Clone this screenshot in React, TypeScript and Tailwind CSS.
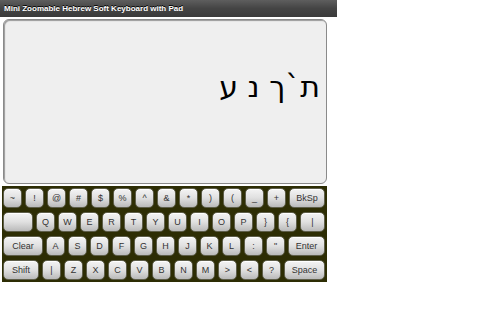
import React from "react";

const Key = ({ label, w }: { label: string; w?: string }) => (
  <div
    className={`${w ?? "w-[19px]"} h-[20px] shrink-0 rounded-[5px] border border-[#5e5e4a] bg-gradient-to-b from-[#f4f4f4] via-[#e0e0e0] to-[#bababa] shadow-[inset_0_1px_0_#ffffff] flex items-center justify-center text-[9px] leading-none text-[#333] font-['Liberation_Sans',Arial,sans-serif]`}
  >
    {label}
  </div>
);

export default function App() {
  const row1 = ["~", "!", "@", "#", "$", "%", "^", "&", "*", ")", "(", "_", "+"];
  const row2 = ["Q", "W", "E", "R", "T", "Y", "U", "I", "O", "P", "}", "{"];
  const row3 = ["A", "S", "D", "F", "G", "H", "J", "K", "L", ":", "\""];
  const row4 = ["|", "Z", "X", "C", "V", "B", "N", "M", ">", "<", "?"];
  return (
    <div className="w-[496px] h-[310px] bg-white font-['Liberation_Sans',Arial,sans-serif]">
      <div className="w-[337px]">
        <div className="h-[17px] bg-gradient-to-b from-[#5e5e5e] via-[#444] to-[#3a3a3a] flex items-center pl-[4px] text-[8px] font-bold text-white [text-shadow:0_-1px_0_#000]">
          Mini Zoomable Hebrew Soft Keyboard with Pad
        </div>
        <div className="h-[2px]" />
        <div className="ml-[3px] w-[324px] h-[165px] rounded-[6px] border border-[#8a8a8a] bg-[#efefef] shadow-[inset_1px_1px_1px_#9a9a9a] flex justify-end items-start pt-[52px] pr-[6px]">
          <div dir="rtl" className="text-[30px] leading-none text-black font-['DejaVu_Sans',sans-serif]">
            ת`ך נ ע
          </div>
        </div>
        <div className="h-[2px]" />
        <div className="ml-[2px] w-[325px] h-[96px] bg-[#2d2d04] pl-[1px] pr-[2px] pt-[2px] flex flex-col gap-[4px]">
          <div className="flex gap-[3px]">
            {row1.map((k) => (
              <Key key={k} label={k} />
            ))}
            <Key label="BkSp" w="flex-1" />
          </div>
          <div className="flex gap-[3px]">
            <Key label="" w="w-[30px]" />
            {row2.map((k) => (
              <Key key={k} label={k} />
            ))}
            <Key label="|" w="flex-1" />
          </div>
          <div className="flex gap-[3px]">
            <Key label="Clear" w="w-[40px]" />
            {row3.map((k) => (
              <Key key={k} label={k} />
            ))}
            <Key label="Enter" w="flex-1" />
          </div>
          <div className="flex gap-[3px]">
            <Key label="Shift" w="w-[36px]" />
            {row4.map((k) => (
              <Key key={k} label={k} />
            ))}
            <Key label="Space" w="flex-1" />
          </div>
        </div>
      </div>
    </div>
  );
}
